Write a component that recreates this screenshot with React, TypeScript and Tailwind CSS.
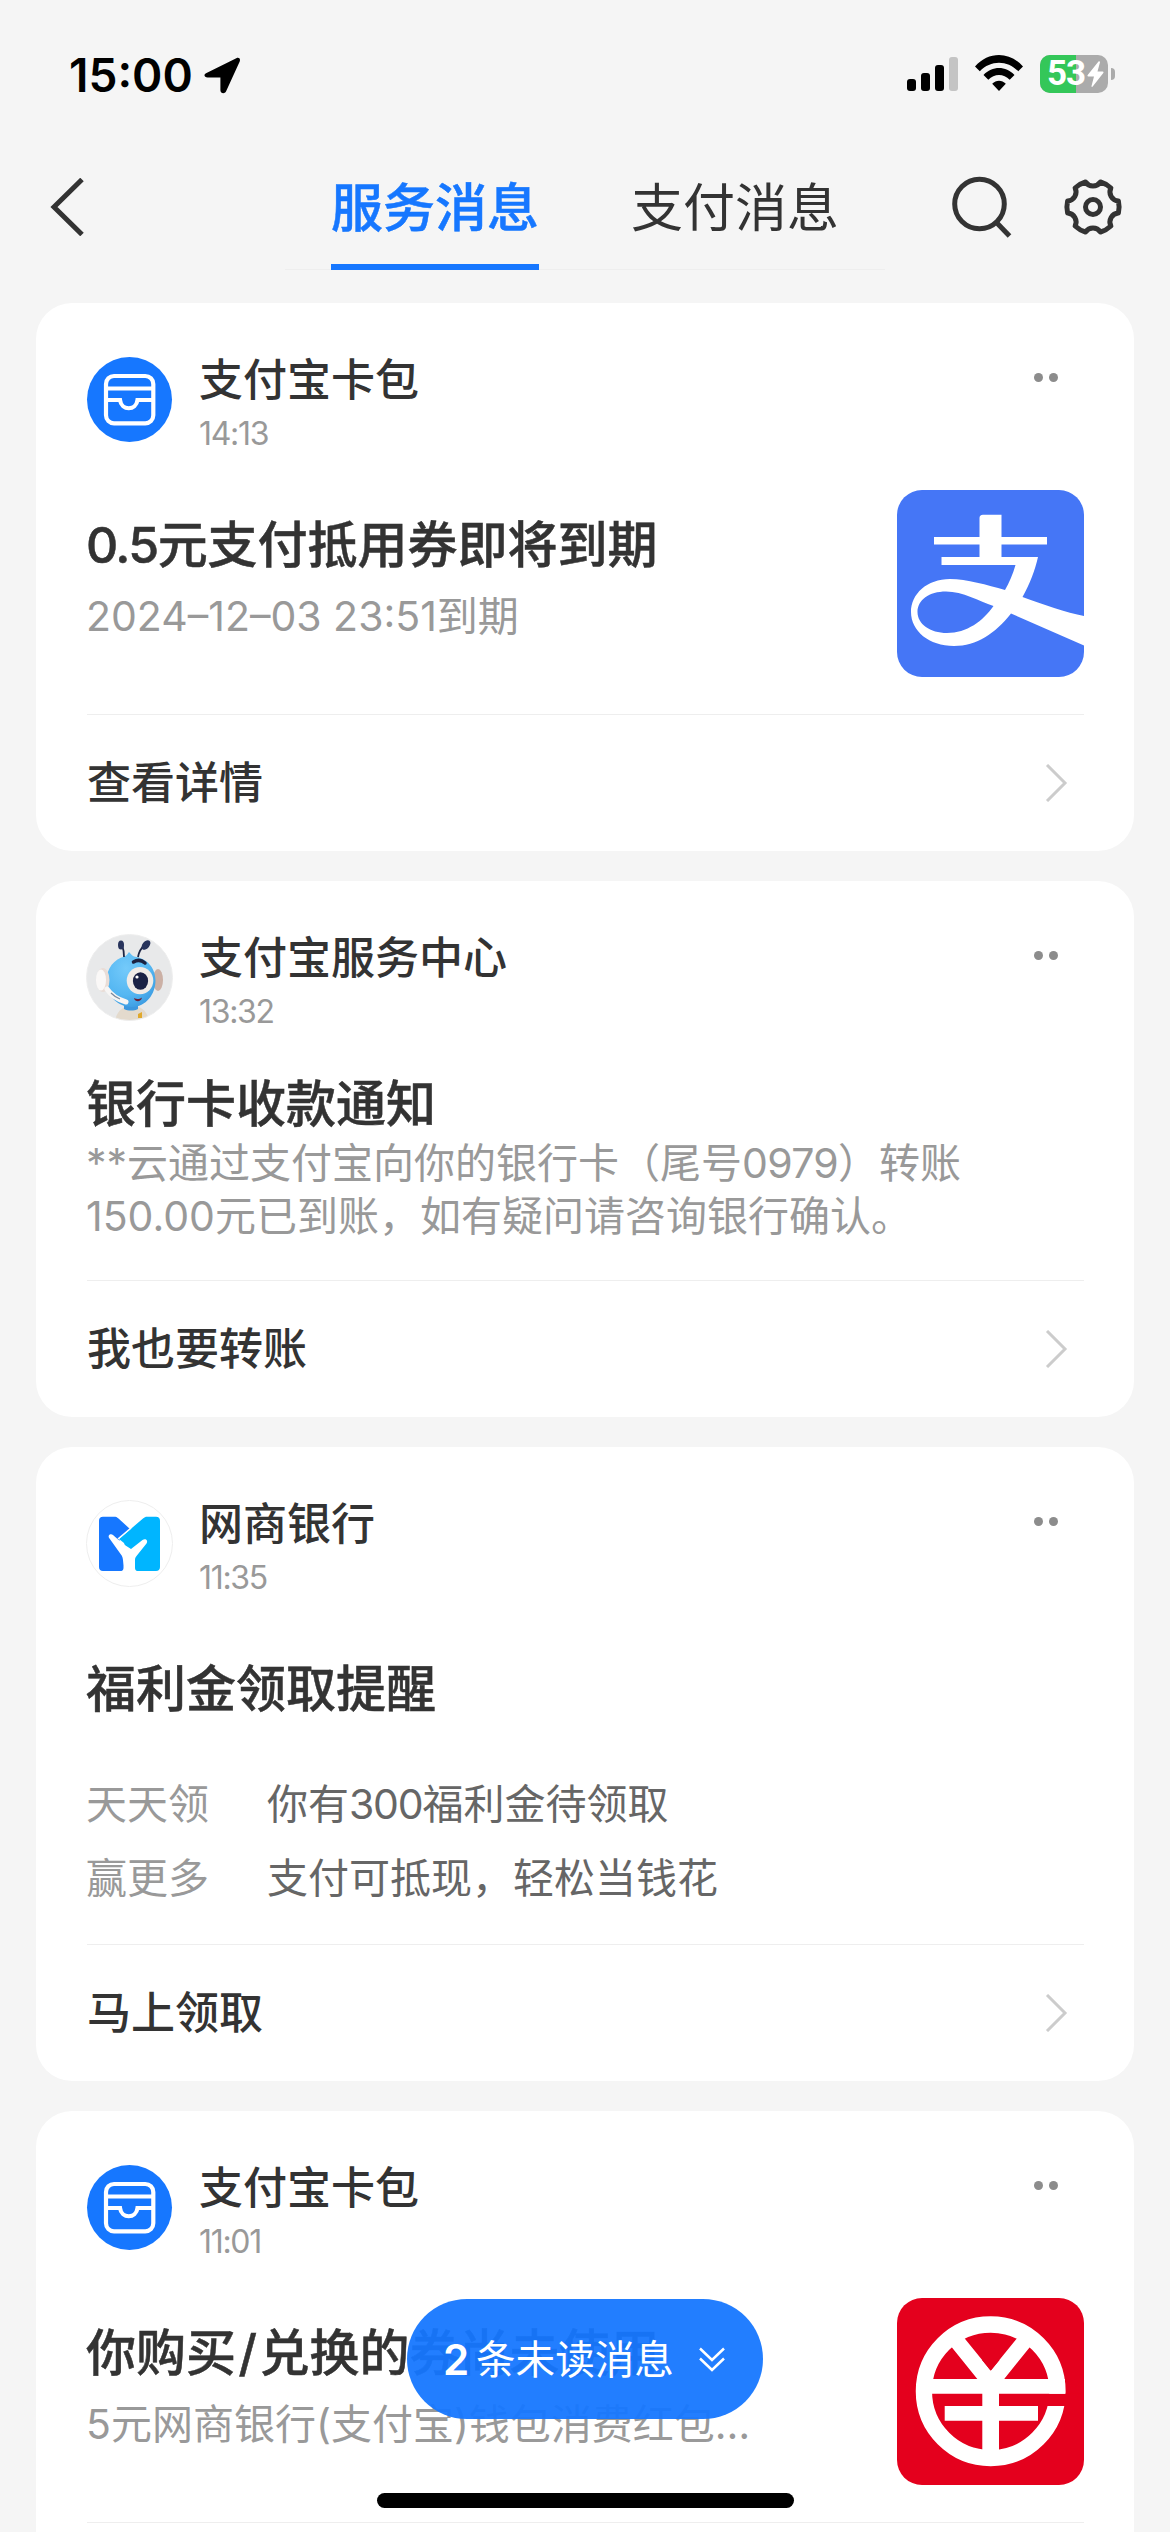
import * as React from "react";

const StatusBar = () => (
  <div className="flex h-[144px] items-start justify-between pt-[50px] pr-[55px] pl-[69px]">
    <div className="flex items-center">
      <span className="w-[135px] text-[46px] leading-[50px] font-semibold text-black">
        15:00
      </span>
      <svg width="37" height="37" viewBox="0 0 37 37">
        <path
          d="M2 16.2 32.3 1.2c2.6-1.1 4.4.6 3.4 3.2L22 34.6c-1.4 2.6-5.6 2-5.6-1.4V20.6H3.600C.2 20.600-.6 17.600 2 16.200Z"
          fill="#000"
        />
      </svg>
    </div>
    <div className="mt-[5px] flex items-center">
      <svg width="51" height="38" viewBox="0 0 51 38">
        <rect x="0" y="24" width="9" height="12" rx="3" />
        <rect x="14" y="18" width="9" height="18" rx="3" />
        <rect x="28" y="10" width="9" height="26" rx="3" />
        <rect x="42" y="2" width="9" height="34" rx="3" fill="#c4c4c4" />
      </svg>
      <svg className="ml-[17px]" width="48" height="38" viewBox="0 0 48 38">
        <path d="M0 11.500C13.500-3.700 34.500-3.700 48 11.500l-4.800 4.700c-10.800-11.400-27.600-11.400-38.400 0Z" />
        <path d="M8.500 20c8.800-9.300 22.200-9.300 31 0l-4.800 4.800c-6-6.300-15.400-6.300-21.400 0Z" />
        <path d="M17.200 28.700c4-3.900 9.600-3.900 13.600 0L24 36Z" />
      </svg>
      <div className="relative ml-[17px] flex h-[38px] w-[68px] items-center rounded-[10px] bg-[#ababab]">
        <div className="absolute inset-y-0 left-0 w-[36px] rounded-l-[10px] bg-[#34c759]" />
        <span className="relative ml-[7px] w-[40px] font-['Roboto'] text-[35px] leading-[38px] font-bold tracking-[-1px] text-white">
          53
        </span>
        <svg
          className="relative"
          width="17"
          height="26"
          viewBox="0 0 17 26"
          fill="#fff"
        >
          <path d="M11.500.5.7 14c-.6.9-.2 1.600.7 1.600H7L4.500 25c-.2.9.7 1.200 1.200.5L16.300 12c.5-.8.2-1.600-.7-1.600H10.500L13 1.200c.1-.9-.9-1.300-1.500-.7Z" />
        </svg>
      </div>
      <div className="ml-[3px] h-[12px] w-[4px] rounded-r-full bg-[#ababab]" />
    </div>
  </div>
);

const NavBar = () => (
  <div className="flex h-[126px]">
    <div className="flex w-[285px] items-center pl-[50px]">
      <svg width="36" height="58" viewBox="0 0 36 58" fill="none">
        <path d="M32 1.500 4 29l28 27.500" stroke="#333" strokeWidth="5" />
      </svg>
    </div>
    <div className="flex w-[600px] border-b border-[#eee] text-[52px] leading-[129px]">
      <div className="relative w-[300px] text-center font-medium text-[#1677ff] [-webkit-text-stroke:0.500px_#1677ff]">
        服务消息
        <div className="absolute top-[120px] left-[46px] h-[6px] w-[208px] bg-[#1677ff]" />
      </div>
      <div className="w-[300px] text-center text-[#333]">支付消息</div>
    </div>
    <div className="flex items-center pl-[65px]">
      <svg width="64" height="64" viewBox="0 0 64 64" fill="none">
        <circle cx="29.500" cy="29" r="24.800" stroke="#333" strokeWidth="5" />
        <path d="m46 47 13.500 14" stroke="#333" strokeWidth="5" />
      </svg>
      <svg
        className="ml-[49px]"
        width="60"
        height="60"
        viewBox="-30 -30 60 60"
        fill="none"
        stroke="#333"
        strokeWidth="5"
        strokeLinejoin="round"
      >
        <path d="M-7.500-25A9 9 0 0 0 7.500-25 26 26 0 0 1 17.900-19A9 9 0 0 0 25.400-6 26 26 0 0 1 25.400 6 9 9 0 0 0 17.900 19 26 26 0 0 1 7.500 25 9 9 0 0 0-7.500 25 26 26 0 0 1-17.900 19 9 9 0 0 0-25.400 6 26 26 0 0 1-25.400-6 9 9 0 0 0-17.900-19 26 26 0 0 1-7.500-25Z" />
        <circle r="7.500" />
      </svg>
    </div>
  </div>
);

const WalletAvatar = () => (
  <svg width="87" height="87" viewBox="0 0 87 87" fill="none">
    <circle cx="43.500" cy="43.500" r="42.500" fill="#1677ff" />
    <g stroke="#fff" strokeWidth="4.200">
      <rect x="20" y="20" width="47.300" height="47.300" rx="8" />
      <path d="M20 32.500h47.300M20 44h14c1.500 11 16 11 17.500 0h15.800" />
    </g>
  </svg>
);

const RobotAvatar = () => (
  <svg width="87" height="87" viewBox="0 0 87 87">
    <defs>
      <clipPath id="robot-clip">
        <circle cx="43.500" cy="43.500" r="43" />
      </clipPath>
      <radialGradient id="robot-face" cx="0.4" cy="0.3" r="0.8">
        <stop offset="0" stopColor="#74cafa" />
        <stop offset="0.6" stopColor="#55b7f2" />
        <stop offset="1" stopColor="#3796de" />
      </radialGradient>
    </defs>
    <g clipPath="url(#robot-clip)">
      <rect width="87" height="87" fill="#e8e9ea" />
      <path d="M29 88c1-10 7-16 17-16s16 6 17 16Z" fill="#e3dacd" />
      <path d="M38 68h14v7c-4 2-10 2-14 0Z" fill="#3c97de" />
      <ellipse cx="72" cy="46" rx="5" ry="11" fill="#cbb0a5" />
      <path
        d="M43 18c2 2 3 4 5 4.500C61 24 69.500 34 69.500 46.500 69.500 60 60 73 46 73S20.500 62 20.500 47c0-13 8-22 18-24.500 2-.5 3-2.500 4.500-4.500Z"
        fill="url(#robot-face)"
      />
      <path
        d="M38 23c0-5-.5-8-2-12M52 23c1-6 3-9 7-12"
        stroke="#1d2545"
        strokeWidth="1.800"
        fill="none"
      />
      <ellipse cx="35" cy="11" rx="3" ry="4.500" fill="#28345c" />
      <ellipse
        cx="60"
        cy="11"
        rx="3.500"
        ry="5.500"
        fill="#28345c"
        transform="rotate(40 60 11)"
      />
      <path
        d="M47.500 28c4-2.500 8-2 11.500 1"
        stroke="#1b2342"
        strokeWidth="3.500"
        strokeLinecap="round"
        fill="none"
      />
      <ellipse cx="54" cy="46.600" rx="13.300" ry="13.700" fill="#f0ebe7" />
      <ellipse cx="54.500" cy="47" rx="7.600" ry="8.700" fill="#1b2144" />
      <circle cx="51" cy="43" r="1.600" fill="#fff" />
      <path d="M48 64c3 1.500 5 1.500 8-.5-1 5-7 5-8 .5Z" fill="#6b2036" />
      <ellipse cx="17" cy="46" rx="6.500" ry="12" fill="#e9ddd7" />
      <ellipse cx="15" cy="46" rx="5" ry="10.500" fill="#faf8f7" />
      <path
        d="M21 55c4 6 9 10 19 13"
        stroke="#f7f5f4"
        strokeWidth="5"
        strokeLinecap="round"
        fill="none"
      />
      <path
        d="M25 59c3 3 6 5 9 6"
        stroke="#7d8a9b"
        strokeWidth="1.200"
        fill="none"
      />
      <path d="m52 80 4-2v6h-4Z" fill="#e0a92e" />
    </g>
    <circle cx="43.500" cy="43.500" r="43" fill="none" stroke="#eee" />
  </svg>
);

const MybankAvatar = () => (
  <svg width="87" height="87" viewBox="0 0 87 87">
    <circle cx="43.500" cy="43.500" r="43" fill="#fff" stroke="#eee" />
    <path
      d="M17 16.700h11c2 0 3 .3 4.500 1.800L44 29 33 38l6 33H17c-2.500 0-4-1.500-4-4V20.700c0-2.500 1.500-4 4-4Z"
      fill="#1677ff"
    />
    <path
      d="M61 16.700h9c2.500 0 4 1.500 4 4V67c0 2.500-1.500 4-4 4H47l-9-28-5-4 24-20.500c1.500-1.300 2.500-1.800 4-1.800Z"
      fill="#00b5ff"
    />
    <path d="M45 28 32 39" stroke="#fff" strokeWidth="1.600" />
    <path
      d="M23.500 38.500c-2.500-3 1-5.500 3.500-3.500 5 4.500 11 10 18 14l11.500-9c3-2 6 .5 4 3.500L50.500 56c-1 1.500-1.500 2-1.500 4v7.500c0 2 .5 3 2 3.500H35.500c1.500-.5 2-1.500 2-3.500V60c0-2-.5-2.500-1.500-4Z"
      fill="#fff"
    />
  </svg>
);

const AlipayLogo = () => (
  <svg
    className="shrink-0 rounded-[25px]"
    width="187"
    height="187"
    viewBox="0 0 187 187"
  >
    <rect width="187" height="187" fill="#4576f6" />
    <path
      fill="#fff"
      fillRule="evenodd"
      d="M86 24.700h18.500V47H150v7.500h-45.500V67H141c-3 13-8 27-15.500 40 19.500 7 44.500 16 61.500 19v29.500L114 123.500c-16 20-34 32.500-57 32.500-25 0-43-15-43-34 0-18 16-33 39-33 17 0 37 6 55 11 4-7 8-16 10.500-25h-74V67H82.500V54.500H37V47h45.500V28c0-2 1-3.300 3.500-3.300ZM96.500 116C82 111 66 101.500 49 101.500c-17 0-28.500 8.500-28.500 20.500S33 143 50 143c20 0 36-12 46.500-27Z"
    />
  </svg>
);

const DigitalYuanLogo = () => (
  <svg
    className="shrink-0 rounded-[25px]"
    width="187"
    height="187"
    viewBox="0 0 187 187"
    fill="none"
  >
    <rect width="187" height="187" fill="#e4001d" />
    <circle cx="93.700" cy="93.300" r="66.800" stroke="#fff" strokeWidth="16.300" />
    <path d="M102 95.700h85V108h-85z" fill="#e4001d" />
    <path d="M57 39.700 88 78M130.500 39.700 99.500 78" stroke="#fff" strokeWidth="15.600" />
    <path
      d="M28 81h53l5-9h15.500l6 9h60.500v14.700H102V108h39v14.700h-39V162H85.300v-39.300H47.700V108h37.600V95.700H28Z"
      fill="#fff"
    />
    <path d="m85 62 8.700 10.700L102.500 62Z" fill="#e4001d" />
  </svg>
);

interface MessageCardProps {
  avatar: React.ReactNode;
  name: string;
  time: string;
  action: string;
  children: React.ReactNode;
}

const MessageCard = ({
  avatar,
  name,
  time,
  action,
  children,
}: MessageCardProps) => (
  <div className="rounded-[36px] bg-white pr-[50px] pl-[51px]">
    <div className="flex pt-[50px]">
      <div className="mt-[3px] -ml-px w-[113px]">{avatar}</div>
      <div className="h-[107px] flex-1">
        <div className="text-[44px] leading-[54px] font-medium text-[#333]">
          {name}
        </div>
        <div className="text-[32px] leading-[54px] tracking-[-1.300px] text-[#999]">
          {time}
        </div>
      </div>
      <div className="mt-[20px] mr-[26px] flex gap-[6px]">
        <div className="size-[9px] rounded-full bg-[#8c8c8c]" />
        <div className="size-[9px] rounded-full bg-[#8c8c8c]" />
      </div>
    </div>
    {children}
    <div className="flex h-[137px] items-center justify-between border-t border-[#eee] pr-[16px]">
      <span className="text-[44px] leading-[54px] font-medium text-[#333]">
        {action}
      </span>
      <svg width="23" height="38" viewBox="0 0 23 38" fill="none">
        <path d="m2 1 18 18L2 37" stroke="#ccc" strokeWidth="3" />
      </svg>
    </div>
  </div>
);

const CardTitle = ({ children }: { children: React.ReactNode }) => (
  <div className="text-[50px] leading-[66px] font-medium text-[#333] [-webkit-text-stroke:0.500px_#333]">
    {children}
  </div>
);

interface CouponBodyProps {
  title: React.ReactNode;
  desc: string;
  logo: React.ReactNode;
}

const CouponBody = ({ title, desc, logo }: CouponBodyProps) => (
  <div className="flex justify-between pt-[30px] pb-[37px]">
    <div className="-ml-px pt-[22px] whitespace-nowrap">
      <CardTitle>{title}</CardTitle>
      <div className="mt-[10px] text-[41px] leading-[56px] text-[#999]">
        {desc}
      </div>
    </div>
    {logo}
  </div>
);

const benefits = [
  {
    label: "天天领",
    value: (
      <>
        你有<span className="tracking-[-1.200px]">300</span>福利金待领取
      </>
    ),
  },
  { label: "赢更多", value: "支付可抵现，轻松当钱花" },
];

export default function App() {
  return (
    <div
      lang="zh-CN"
      className="relative h-[2532px] w-[1170px] overflow-hidden bg-[#f5f5f5] font-['Inter','Noto_Sans_CJK_SC',sans-serif]"
    >
      <StatusBar />
      <NavBar />
      <div className="mt-[33px] flex flex-col gap-[30px] px-[36px]">
        <MessageCard
          avatar={<WalletAvatar />}
          name="支付宝卡包"
          time="14:13"
          action="查看详情"
        >
          <CouponBody
            title={
              <>
                <span className="tracking-[-1.600px]">0.5</span>
                元支付抵用券即将到期
              </>
            }
            desc="2024–12–03 23:51到期"
            logo={<AlipayLogo />}
          />
        </MessageCard>
        <MessageCard
          avatar={<RobotAvatar />}
          name="支付宝服务中心"
          time="13:32"
          action="我也要转账"
        >
          <div className="-ml-px pt-[33px] pb-[37px]">
            <CardTitle>银行卡收款通知</CardTitle>
            <div className="text-[41px] leading-[53px] whitespace-nowrap text-[#999]">
              **云通过支付宝向你的银行卡（尾号
              <span className="tracking-[-0.700px]">0979</span>）转账
              <br />
              150.00元已到账，如有疑问请咨询银行确认。
            </div>
          </div>
        </MessageCard>
        <MessageCard
          avatar={<MybankAvatar />}
          name="网商银行"
          time="11:35"
          action="马上领取"
        >
          <div className="-ml-px pt-[52px] pb-[29px]">
            <div className="mb-[45px]">
              <CardTitle>福利金领取提醒</CardTitle>
            </div>
            {benefits.map((item) => (
              <div key={item.label} className="flex text-[41px] leading-[74px]">
                <span className="w-[181px] text-[#999]">{item.label}</span>
                <span className="text-[#666]">{item.value}</span>
              </div>
            ))}
          </div>
        </MessageCard>
        <MessageCard
          avatar={<WalletAvatar />}
          name="支付宝卡包"
          time="11:01"
          action="查看详情"
        >
          <CouponBody
            title={
              <>
                你购买<span className="mx-[2.500px]">/</span>兑换的券尚未使用
              </>
            }
            desc="5元网商银行(支付宝)钱包消费红包…"
            logo={<DigitalYuanLogo />}
          />
        </MessageCard>
      </div>

      {/* unread pill, floats over the list */}
      <div className="absolute top-[2299px] left-[407px] flex h-[120px] w-[356px] items-center rounded-full bg-[#1677ff]/95 pt-[2px] pl-[36px] text-white">
        <span className="w-[33px] text-[42px] leading-[60px] font-semibold">
          2
        </span>
        <span className="text-[39.600px] leading-[60px]">条未读消息</span>
        <svg
          className="ml-[24px]"
          width="28"
          height="28"
          viewBox="0 0 28 28"
          fill="none"
          stroke="#fff"
          strokeWidth="2.500"
        >
          <path d="m2 2.500 12 11.500L26 2.500M2 12.500 14 24l12-11.500" />
        </svg>
      </div>
      <div className="absolute top-[2493px] left-[377px] h-[15px] w-[417px] rounded-full bg-black" />
    </div>
  );
}
